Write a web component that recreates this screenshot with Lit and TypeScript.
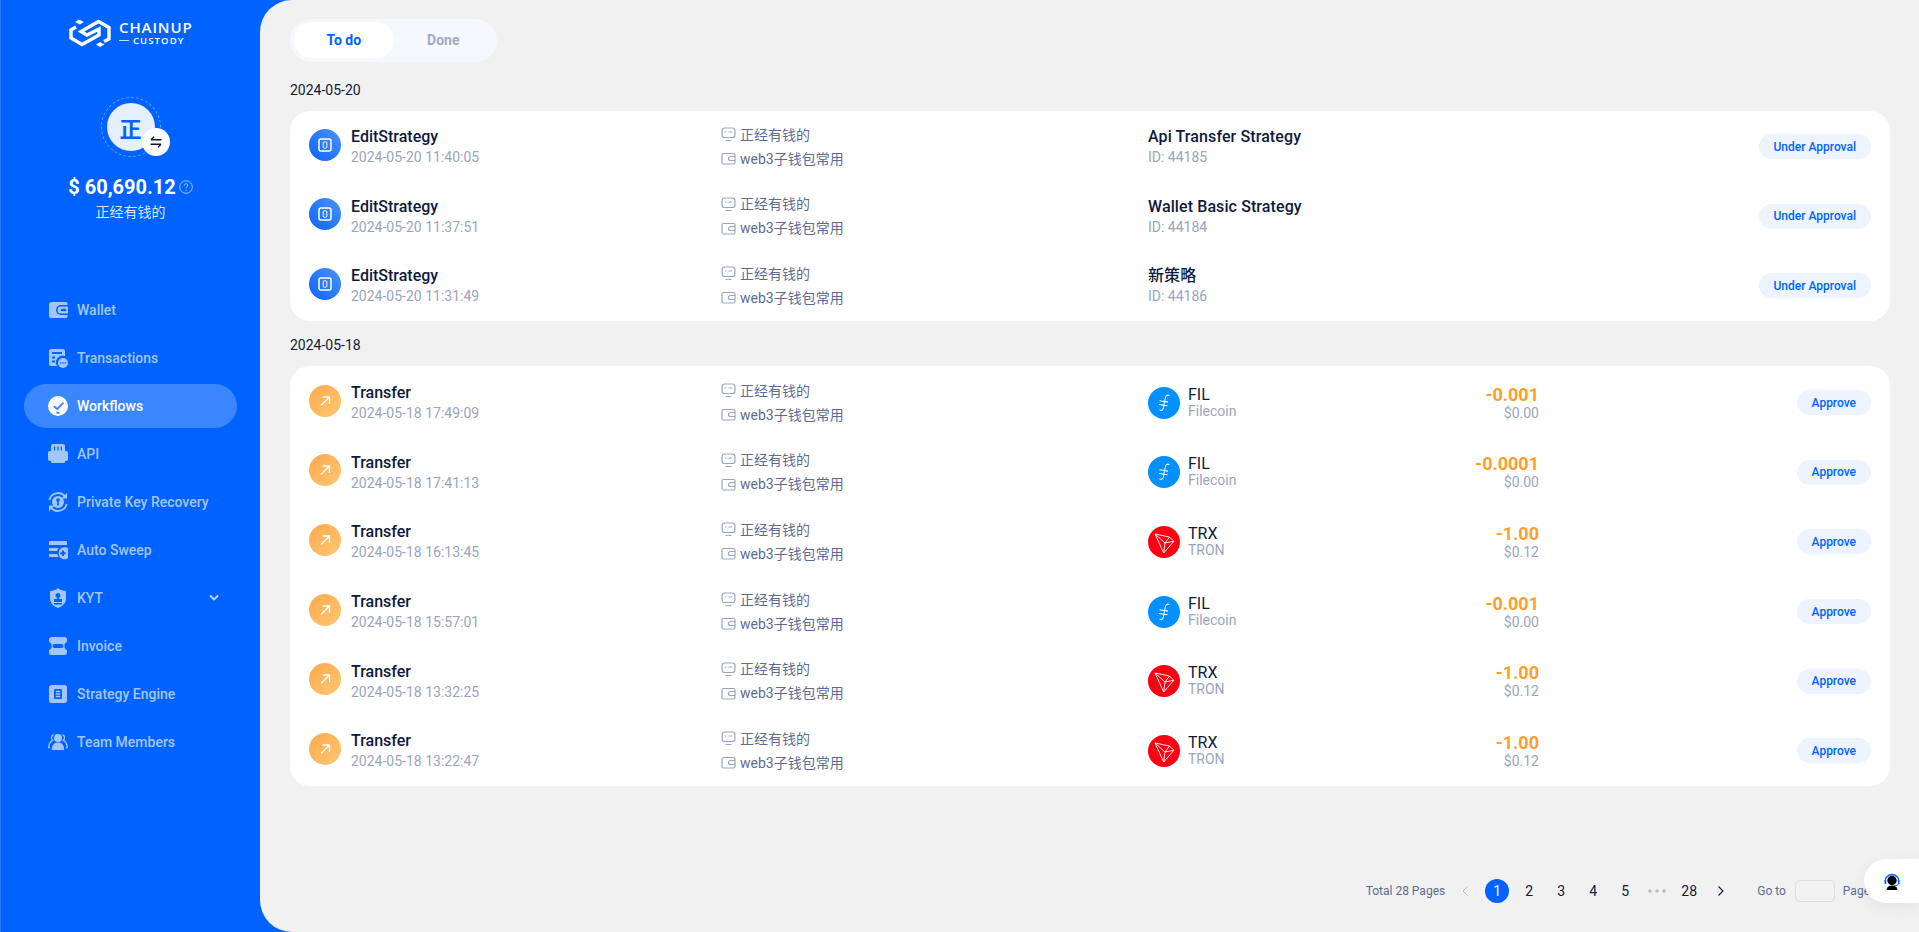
import { LitElement, html, css, svg } from "lit";
import { customElement } from "lit/decorators.js";

const navIcons: Record<string, any> = {
  wallet: svg`<path fill-rule="evenodd" d="M4 2h14a1.500 1.500 0 0 1 1.500 1.500V5H13a5 5 0 0 0 0 10h6.500v1.500A1.500 1.500 0 0 1 18 18H3a2 2 0 0 1-2-2V5a3 3 0 0 1 3-3Z"/><path fill-rule="evenodd" d="M13 6.500h6a1 1 0 0 1 1 1v5a1 1 0 0 1-1 1h-6a3.500 3.500 0 0 1 0-7Zm1 2.200a1.300 1.300 0 1 0 0 2.600h3a1.300 1.300 0 1 0 0-2.600Z"/>`,
  tx: svg`<path fill-rule="evenodd" d="M3 1h12a2 2 0 0 1 2 2v5.200A6.500 6.500 0 0 0 9.200 18H3a2 2 0 0 1-2-2V3a2 2 0 0 1 2-2Zm1 3v2h10V4Zm0 4.500v2h3v-2Zm0 4v2h3v-2Z"/><circle cx="15" cy="15" r="5"/><g fill="#0062ff"><circle cx="12.800" cy="15" r=".8"/><circle cx="15" cy="15" r=".8"/><circle cx="17.200" cy="15" r=".8"/></g>`,
  flow: svg`<path fill-rule="evenodd" d="M10 0a10 10 0 1 1 0 20 10 10 0 0 1 0-20Zm4.700 6-5.400 5.700L6.500 9.500 5.200 11l4.300 3.300 6.600-7ZM8.500 15.500v2.200h3v-1.500Z"/>`,
  api: svg`<path fill-rule="evenodd" d="M5 0h10a2 2 0 0 1 2 2v5h1.500A1.500 1.500 0 0 1 20 8.500V15a2 2 0 0 1-2 2h-1v1a1 1 0 0 1-1 1H4a1 1 0 0 1-1-1v-1H2a2 2 0 0 1-2-2V8.500A1.500 1.500 0 0 1 1.500 7H3V2a2 2 0 0 1 2-2Zm1 2.500v4h1.200v-4Zm3.400 0v4h1.200v-4Zm3.400 0v4H14v-4Z"/>`,
  key: svg`<path fill="none" stroke="currentColor" stroke-width="1.800" d="M1.400 8A8.800 8.800 0 0 1 17 4.500M18.600 12A8.800 8.800 0 0 1 3 15.500"/><path d="M19 .8v5.700h-5.700ZM1 19.200v-5.700h5.700Z"/><path fill-rule="evenodd" d="M10 4a6 6 0 1 1 0 12 6 6 0 0 1 0-12Zm0 2.200a1.800 1.800 0 0 0-.9 3.360V13.500h1.800V9.560A1.800 1.800 0 0 0 10 6.200Z"/>`,
  sweep: svg`<path d="M2 1a1 1 0 0 0-1 1v3h18V2a1 1 0 0 0-1-1ZM1 8h9.500a6.500 6.500 0 0 0-1.300 3H1ZM1 14h8.200l1.300 3H2a1 1 0 0 1-1-1Z"/><path fill-rule="evenodd" d="M15 7.500a6 6 0 1 1 0 11.500 6 6 0 0 1 0-11.500Zm-1 3v1.700h-1.700v2H14V16h2v-1.800h1.700v-2H16v-1.700Z"/>`,
  kyt: svg`<path fill-rule="evenodd" d="M10 0c1.500 1.800 4.500 2.800 8 3v8c0 4-3.500 7.200-8 9-4.500-1.800-8-5-8-9V3c3.500-.2 6.500-1.200 8-3Zm0 5a2.500 2.500 0 0 0-1 4.800V11H6v3h8v-3h-3V9.800A2.500 2.500 0 0 0 10 5Zm-4 10v1.500h8V15Z"/>`,
  invoice: svg`<path fill-rule="evenodd" d="M3.500 1h13A2.500 2.500 0 0 1 19 3.500v1.800a1 1 0 0 1-.7 1L16.500 8v4l1.800 1.700a1 1 0 0 1 .7 1v1.800a2.500 2.500 0 0 1-2.500 2.500h-13A2.500 2.500 0 0 1 1 16.500v-1.800a1 1 0 0 1 .7-1L3.500 12V8L1.700 6.300a1 1 0 0 1-.7-1V3.500A2.500 2.500 0 0 1 3.500 1Zm3 7a2 2 0 0 0 0 4h7a2 2 0 0 0 0-4Z"/>`,
  strategy: svg`<path fill-rule="evenodd" d="M3.500 1h13A2.500 2.500 0 0 1 19 3.500v13a2.500 2.500 0 0 1-2.500 2.500h-13A2.500 2.500 0 0 1 1 16.500v-13A2.500 2.500 0 0 1 3.500 1ZM7 5a1 1 0 0 0-1 1v8a1 1 0 0 0 1 1h6a1 1 0 0 0 1-1V6a1 1 0 0 0-1-1Zm.8 1.800h4.400v1.400H7.800Zm0 2.500h4.400v1.400H7.800Zm0 2.500h4.400v1.400H7.800Z"/>`,
  team: svg`<circle cx="10" cy="6" r="4"/><path d="M3.800 18c0-5 2.300-7.500 6.200-7.500s6.200 2.500 6.200 7.500Z"/><path fill="none" stroke="currentColor" stroke-width="1.300" d="M5.500 2.500a3.500 3.500 0 0 0-.8 5.800C2 9.500 1 12 .7 15.500l1.500.5M14.500 2.500a3.500 3.500 0 0 1 .8 5.800c2.700 1.200 3.700 3.700 4 7.200l-1.500.5"/>`,
};

const nav = [
  ["wallet", "Wallet"], ["tx", "Transactions"], ["flow", "Workflows"], ["api", "API"],
  ["key", "Private Key Recovery"], ["sweep", "Auto Sweep"], ["kyt", "KYT"],
  ["invoice", "Invoice"], ["strategy", "Strategy Engine"], ["team", "Team Members"],
];

const strategies = [
  ["2024-05-20 11:40:05", "Api Transfer Strategy", "ID: 44185"],
  ["2024-05-20 11:37:51", "Wallet Basic Strategy", "ID: 44184"],
  ["2024-05-20 11:31:49", "新策略", "ID: 44186"],
];

const transfers = [
  ["2024-05-18 17:49:09", "FIL", "-0.001", "$0.00"],
  ["2024-05-18 17:41:13", "FIL", "-0.0001", "$0.00"],
  ["2024-05-18 16:13:45", "TRX", "-1.00", "$0.12"],
  ["2024-05-18 15:57:01", "FIL", "-0.001", "$0.00"],
  ["2024-05-18 13:32:25", "TRX", "-1.00", "$0.12"],
  ["2024-05-18 13:22:47", "TRX", "-1.00", "$0.12"],
];

@customElement("app-root")
export class AppRoot extends LitElement {
  static styles = css`
    :host { display: block; height: 932px; overflow: hidden; font-family: Roboto, "Noto Sans CJK SC", sans-serif; }
    * { box-sizing: border-box; }
    .page { display: flex; height: 932px; background: #0062ff; }
    .side { width: 260px; flex: none; border-left: 1px solid #2a7cff; color: #fff; display: flex; flex-direction: column; align-items: stretch; }
    .logo { display: flex; align-items: center; gap: 7px; height: 28px; margin: 19px 0 0 68px; }
    .logo-text { display: flex; flex-direction: column; font-family: "Open Sans", sans-serif; line-height: 1; }
    .logo-main { font-size: 15px; letter-spacing: .9px; font-weight: 600; line-height: 15px; }
    .logo-sub { font-size: 9.500px; letter-spacing: 1.100px; font-weight: 600; display: flex; align-items: center; gap: 4px; line-height: 12px; }
    .logo-dash { width: 10px; height: 1px; background: #fff; opacity: .8; }
    .avatar-wrap { position: relative; width: 60px; height: 60px; margin: 50px auto 0; border: 1px dashed rgba(255,255,255,.4); border-radius: 50%; display: flex; align-items: center; justify-content: center; }
    .avatar { width: 48px; height: 48px; border-radius: 50%; background: #e5efff; color: #0062ff; font-size: 22px; font-weight: 700; display: flex; align-items: center; justify-content: center; font-family: "Noto Sans CJK SC", sans-serif; }
    .swap { position: absolute; left: 40px; top: 30px; width: 28px; height: 28px; border-radius: 50%; background: #fff; display: flex; align-items: center; justify-content: center; }
    .balance { display: flex; align-items: center; justify-content: center; gap: 3px; margin-top: 16px; font-size: 20px; font-weight: 700; line-height: 28px; }
    .wallet-name { text-align: center; font-size: 14px; line-height: 20px; color: #dbe8ff; margin-top: 1px; }
    .nav { list-style: none; margin: 66px 0 0; padding: 0 23px; display: flex; flex-direction: column; gap: 4px; }
    .nav li { height: 44px; border-radius: 22px; display: flex; align-items: center; padding-left: 24px; gap: 9px; font-size: 14px; font-weight: 500; color: #a3c6ff; position: relative; }
    .nav li.active { background: #3a86ff; color: #fff; }
    .nav svg.ni { width: 20px; height: 20px; fill: currentColor; flex: none; }
    .nav .chev { position: absolute; right: 17px; top: 17px; }
    .main { flex: 1; min-width: 0; background: #f1f1f1; border-radius: 32px 0 0 32px; padding: 19px 29px 29px 30px; display: flex; flex-direction: column; }
    .tabs { display: flex; width: 207px; height: 43px; padding: 3px 4px 4px; border-radius: 22px; background: #f5f8fe; font-size: 14px; font-weight: 700; }
    .tab { width: 100px; height: 36px; border-radius: 18px; display: flex; align-items: center; justify-content: center; color: #a0abc0; }
    .tab.active { background: #fff; color: #0062ff; }
    .date { font-size: 14px; line-height: 20px; color: #0e1a3d; margin: 18px 0 11px; }
    .card + .date { margin-top: 14px; }
    .card { background: #fff; border-radius: 20px; padding: 1px 0 .2px; }
    .card.long { padding: 2px 0 .4px; }
    .row { height: 69.600px; display: grid; grid-template-columns: 412px 427px 391px 1fr; align-items: center; padding: 0 19px; }
    .who { display: flex; align-items: center; gap: 10px; }
    .who .circle { margin-bottom: 4px; }
    .circle { width: 32px; height: 32px; flex: none; display: block; }
    .t1 { font-size: 16px; line-height: 22px; font-weight: 500; color: #0e1a3d; }
    .t2 { font-size: 14px; line-height: 19px; color: #9aa5bd; }
    .nm .t1 { letter-spacing: .1px; }
    .acct { font-size: 14px; line-height: 24px; color: #5d6b94; }
    .acct div { display: flex; align-items: center; gap: 4px; }
    .asset { display: flex; align-items: center; gap: 8px; }
    .sym { font-size: 16px; line-height: 17px; color: #0e1a3d; }
    .net { font-size: 14px; line-height: 17px; color: #9aa5bd; }
    .amt { text-align: right; margin-left: auto; }
    .amt-v { font-size: 18px; line-height: 21px; font-weight: 700; color: #ff9e2e; }
    .amt-u { font-size: 14px; line-height: 17px; color: #9aa5bd; }
    .st { display: flex; justify-content: flex-end; }
    .badge { height: 25px; border-radius: 13px; background: #edf4ff; color: #0062ff; font-size: 12px; font-weight: 500; display: flex; align-items: center; padding: 0 15px; }
    .pager { margin-top: auto; height: 24px; display: flex; align-items: center; justify-content: flex-end; font-size: 14px; color: #0e1a3d; padding-right: 20px; white-space: nowrap; }
    .pager .lbl { color: #5d6b94; font-size: 12px; }
    .pager .gap-l { margin-left: 4px; }
    .pager .gap-go { margin-left: 20px; }
    .pg { width: 32px; height: 24px; display: flex; align-items: center; justify-content: center; }
    .pg.on { width: 24px; margin: 0 4px; border-radius: 50%; background: #0062ff; color: #fff; }
    .goto { width: 40px; height: 22px; border: 1px solid #dcdfe4; border-radius: 5px; margin: 0 8px 0 9px; }
    .support { position: absolute; right: 0; top: 859px; width: 55px; height: 44px; background: #fff; border-radius: 22px 0 0 22px; box-shadow: 0 4px 16px rgba(0,0,0,.06); display: flex; align-items: center; justify-content: center; }
  `;

  private acct() {
    return html`<div class="acct">
      <div><svg width="15" height="15" viewBox="0 0 15 15" fill="none" stroke="#9aa5bd" stroke-width="1.200"><rect x="1.100" y="1" width="12.800" height="9.500" rx="2.500"/><path d="M4 5h1.500M7.500 5H11M4.500 13.500h6"/></svg>正经有钱的</div>
      <div><svg width="15" height="15" viewBox="0 0 15 15" fill="none" stroke="#9aa5bd" stroke-width="1.200"><rect x="1" y="2.500" width="13" height="10.500" rx="1.500"/><path d="M14 5.500H9.500a2 2 0 0 0 0 4H14"/></svg>web3子钱包常用</div>
    </div>`;
  }

  private editIcon() {
    return html`<svg class="circle" viewBox="0 0 32 32"><defs><linearGradient id="bg" x1="0" y1="1" x2="1" y2="0"><stop offset="0" stop-color="#0f62f5"/><stop offset="1" stop-color="#4a94ff"/></linearGradient></defs><circle cx="16" cy="16" r="16" fill="url(#bg)"/><rect x="10" y="10" width="12" height="12" rx="2" fill="none" stroke="#fff" stroke-width="1.500"/><rect x="14.200" y="12.800" width="3.600" height="6.400" rx="1" fill="none" stroke="#fff" stroke-width="1"/></svg>`;
  }

  private transferIcon() {
    return html`<svg class="circle" viewBox="0 0 32 32"><defs><linearGradient id="og" x1="0" y1="0" x2="1" y2="1"><stop offset="0" stop-color="#ffa94a"/><stop offset="1" stop-color="#ffc774"/></linearGradient></defs><circle cx="16" cy="16" r="16" fill="url(#og)"/><path d="M12 20.500 20.500 12M13.500 12h7v7" fill="none" stroke="#fff" stroke-width="1.400"/></svg>`;
  }

  private coin(sym: string) {
    if (sym === "FIL")
      return html`<svg class="circle" viewBox="0 0 32 32"><circle cx="16" cy="16" r="16" fill="#0090ff"/><path d="M21.500 8.500c-2.500-1-3.800.3-4.300 3l-1.700 9c-.5 2.600-1.700 3.300-4 2.500M11.500 13.800l8.500 1.300M11 17.500l8.500 1.300" fill="none" stroke="#fff" stroke-width="1.100"/></svg>`;
    return html`<svg class="circle" viewBox="0 0 32 32"><circle cx="16" cy="16" r="16" fill="#ff0013"/><path d="M7 8 21.500 11l4.300 4.300L15.700 27Zm0 0 10 9-1.300 10M17 17l8.800-1.700M17 17l4.500-6" fill="none" stroke="#fff" stroke-width=".9" stroke-linejoin="round"/></svg>`;
  }

  render() {
    return html`<div class="page">
      <aside class="side">
        <div class="logo">
          <svg width="43" height="28" viewBox="0 0 43 28" fill="#fff"><path d="M7 8 2 11v8l11 6.500 17-9.500v-6L18 16l-6-3.500 7-4 10.500-6 10.500 6v11.500L35 22.500" fill="none" stroke="#fff" stroke-width="3.400"/><path d="M6 3l4-2.500L15 3l-4 2.500ZM27 25.500 31 23l4.500 2.500L31 28Z"/></svg>
          <div class="logo-text"><span class="logo-main">CHAINUP</span><span class="logo-sub"><span class="logo-dash"></span>CUSTODY</span></div>
        </div>
        <div class="avatar-wrap">
          <div class="avatar">正</div>
          <div class="swap"><svg width="14" height="14" viewBox="0 0 14 14" fill="none" stroke="#0e1a3d" stroke-width="1.400"><path d="M2 4.800h10.500M5 1.800 2 4.800M1.500 9.200H12M9 12.200l3-3"/></svg></div>
        </div>
        <div class="balance">$ 60,690.12
          <svg width="14" height="14" viewBox="0 0 14 14" fill="none" stroke="#a3c6ff"><circle cx="7" cy="7" r="6.300"/><path d="M5.200 5.500a1.800 1.800 0 1 1 2.600 1.600c-.6.300-.8.700-.8 1.300M7 9.700v1.200"/></svg>
        </div>
        <div class="wallet-name">正经有钱的</div>
        <ul class="nav">
          ${nav.map(([ic, label]) => html`<li class=${ic === "flow" ? "active" : ""}>
            <svg class="ni" viewBox="0 0 20 20">${navIcons[ic]}</svg>${label}
            ${ic === "kyt" ? html`<svg class="chev" width="12" height="10" viewBox="0 0 12 10" fill="none" stroke="#c4dbff" stroke-width="1.800"><path d="M2 2.500 6 6.500l4-4"/></svg>` : ""}
          </li>`)}
        </ul>
      </aside>
      <main class="main">
        <div class="tabs"><div class="tab active">To do</div><div class="tab">Done</div></div>
        <div class="date">2024-05-20</div>
        <section class="card">
          ${strategies.map(([time, name, id]) => html`<div class="row">
            <div class="who">${this.editIcon()}<div><div class="t1">EditStrategy</div><div class="t2">${time}</div></div></div>
            ${this.acct()}
            <div class="nm"><div class="t1">${name}</div><div class="t2">${id}</div></div>
            <div class="st"><span class="badge">Under Approval</span></div>
          </div>`)}
        </section>
        <div class="date">2024-05-18</div>
        <section class="card long">
          ${transfers.map(([time, sym, amt, usd]) => html`<div class="row">
            <div class="who">${this.transferIcon()}<div><div class="t1">Transfer</div><div class="t2">${time}</div></div></div>
            ${this.acct()}
            <div class="asset">${this.coin(sym)}<div><div class="sym">${sym}</div><div class="net">${sym === "FIL" ? "Filecoin" : "TRON"}</div></div>
              <div class="amt"><div class="amt-v">${amt}</div><div class="amt-u">${usd}</div></div></div>
            <div class="st"><span class="badge">Approve</span></div>
          </div>`)}
        </section>
        <nav class="pager">
          <span class="lbl">Total 28 Pages</span>
          <span class="pg gap-l"><svg width="10" height="12" viewBox="0 0 10 12" fill="none" stroke="#b6bccb" stroke-width="1"><path d="M7.500 1.500 3 6l4.500 4.500"/></svg></span>
          <span class="pg on">1</span><span class="pg">2</span><span class="pg">3</span><span class="pg">4</span><span class="pg">5</span>
          <span class="pg"><svg width="18" height="4" viewBox="0 0 18 4" fill="#b6b9c2"><circle cx="2" cy="2" r="1.700"/><circle cx="9" cy="2" r="1.700"/><circle cx="16" cy="2" r="1.700"/></svg></span>
          <span class="pg">28</span>
          <span class="pg"><svg width="10" height="12" viewBox="0 0 10 12" fill="none" stroke="#0e1a3d" stroke-width="1.100"><path d="M2.500 1.500 7 6l-4.500 4.500"/></svg></span>
          <span class="lbl gap-go">Go to</span>
          <span class="goto"></span>
          <span class="lbl">Page</span>
        </nav>
      </main>
      <div class="support"><svg width="20" height="20" viewBox="0 0 20 20"><path d="M3 10.500a7 7 0 0 1 14 0" fill="none" stroke="#0062ff" stroke-width="1.400"/><path d="M2.500 9h1.700v4H2.500ZM15.800 9h1.700v4h-1.700Z" fill="#0062ff"/><circle cx="10" cy="9.500" r="4.700"/><path d="M4.500 19c.3-3 2-4.500 5.500-4.500s5.200 1.500 5.500 4.500Z"/><path d="M16.500 13c-.5 1.300-2 1.500-4.500 1.500" fill="none" stroke="#0062ff"/></svg></div>
    </div>`;
  }
}
